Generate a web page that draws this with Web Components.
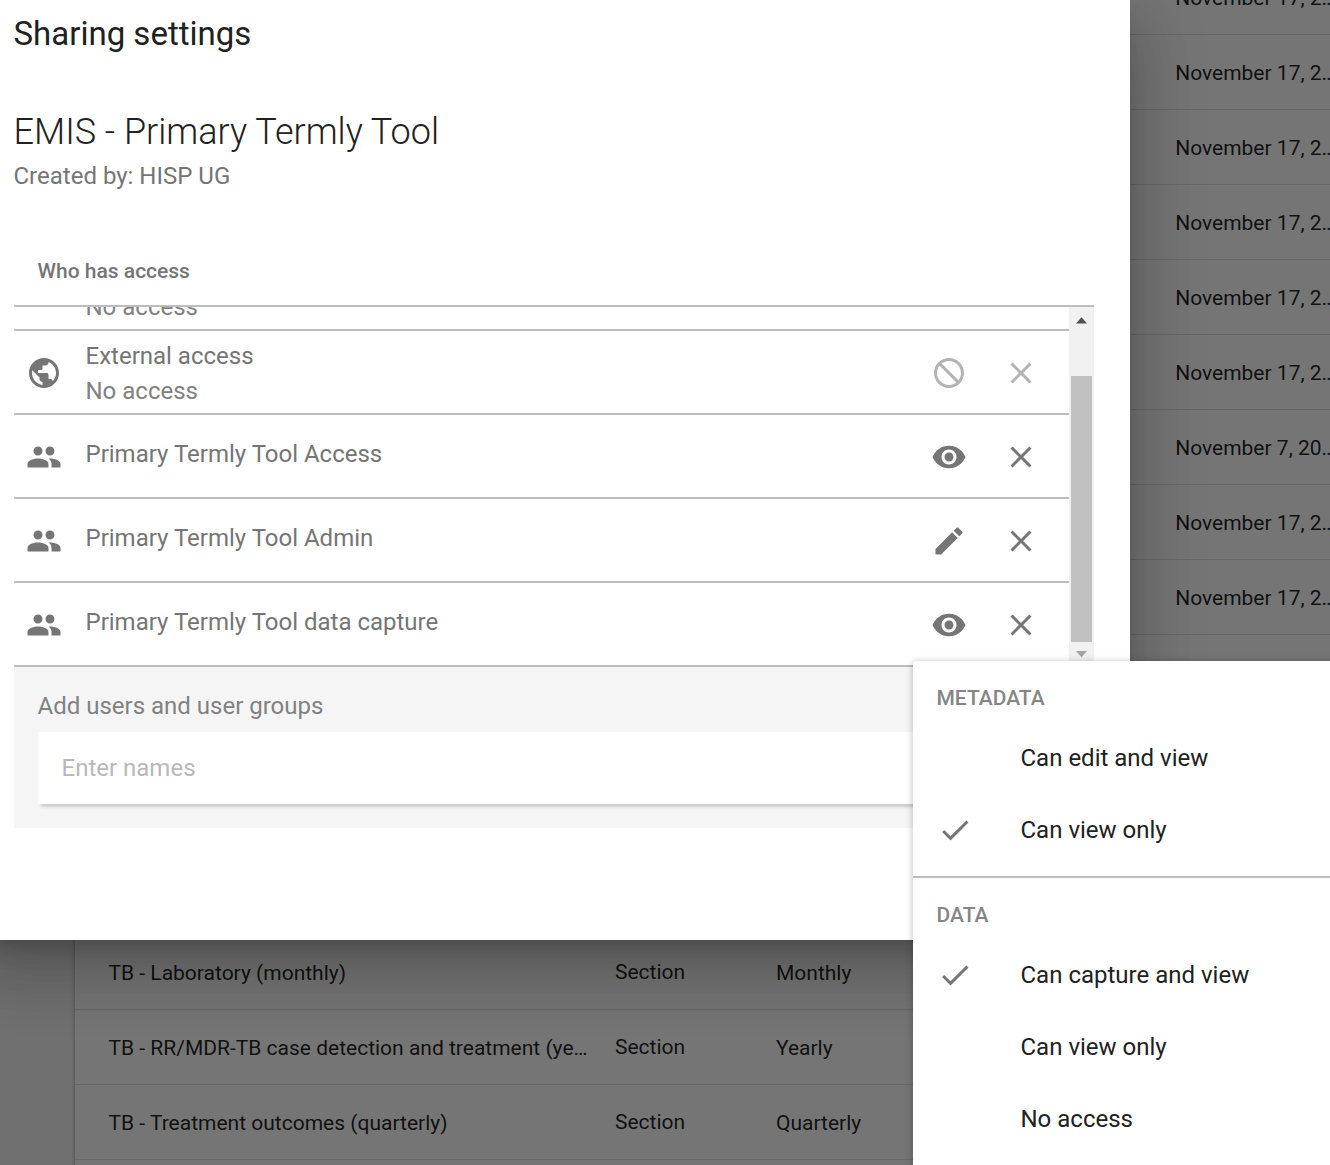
<!DOCTYPE html>
<html lang="en">
<head>
<meta charset="utf-8">
<title>Sharing settings</title>
<style>
  html, body { margin: 0; height: 100%; overflow: hidden; }
  body { font-family: Roboto, "Liberation Sans", sans-serif; background: #fff; }
</style>
</head>
<body>
<sharing-page></sharing-page>
<script>
const define = (name, html, setup) => {
  const template = document.createElement('template');
  template.innerHTML = html;
  customElements.define(name, class extends HTMLElement {
    constructor() {
      super();
      this.attachShadow({ mode: 'open' }).append(template.content.cloneNode(true));
    }
    connectedCallback() { if (setup) setup(this, this.shadowRoot); }
  });
};

/* Material icon paths on a 24 unit grid */
const ICONS = {
  globe: 'M12 2C6.48 2 2 6.48 2 12s4.48 10 10 10 10-4.48 10-10S17.52 2 12 2zm-1 17.93c-3.95-.49-7-3.85-7-7.93 0-.62.08-1.21.21-1.79L9 15v1c0 1.1.9 2 2 2v1.93zm6.9-2.54c-.26-.81-1-1.39-1.9-1.39h-1v-3c0-.55-.45-1-1-1H8v-2h2c.55 0 1-.45 1-1V7h2c1.1 0 2-.9 2-2v-.41c2.93 1.19 5 4.06 5 7.41 0 2.08-.8 3.97-2.1 5.39z',
  group: 'M16 11c1.66 0 2.99-1.34 2.99-3S17.66 5 16 5c-1.66 0-3 1.34-3 3s1.34 3 3 3zm-8 0c1.66 0 2.99-1.34 2.99-3S9.66 5 8 5C6.34 5 5 6.34 5 8s1.34 3 3 3zm0 2c-2.33 0-7 1.17-7 3.5V19h14v-2.5c0-2.33-4.67-3.5-7-3.5zm8 0c-.29 0-.62.02-.97.05 1.16.84 1.97 1.97 1.97 3.45V19h6v-2.5c0-2.33-4.67-3.5-7-3.5z',
  block: 'M12 2C6.48 2 2 6.48 2 12s4.48 10 10 10 10-4.48 10-10S17.52 2 12 2zM4 12c0-1.85.63-3.55 1.69-4.9L16.9 18.31C15.55 19.37 13.85 20 12 20c-4.42 0-8-3.58-8-8zm14.31 4.9L7.1 5.69C8.45 4.63 10.15 4 12 4c4.42 0 8 3.58 8 8 0 1.85-.63 3.55-1.69 4.9z',
  eye: 'M12 4.5C7 4.5 2.73 7.61 1 12c1.73 4.39 6 7.5 11 7.5s9.27-3.11 11-7.5c-1.73-4.39-6-7.5-11-7.5zM12 17c-2.76 0-5-2.24-5-5s2.24-5 5-5 5 2.24 5 5-2.24 5-5 5zm0-8c-1.66 0-3 1.34-3 3s1.34 3 3 3 3-1.34 3-3-1.34-3-3-3z',
  pencil: 'M3 17.25V21h3.75L17.81 9.94l-3.75-3.75L3 17.25zM20.71 7.04c.39-.39.39-1.02 0-1.41l-2.34-2.34c-.39-.39-1.02-.39-1.41 0l-1.83 1.83 3.75 3.75 1.83-1.83z',
  close: 'M19 6.41L17.59 5 12 10.59 6.41 5 5 6.41 10.59 12 5 17.59 6.41 19 12 13.41 17.59 19 19 17.59 13.41 12z',
  check: 'M9 16.17L4.83 12l-1.42 1.41L9 19 21 7l-1.41-1.41z'
};

define('md-icon', `
  <style>
    :host { display: block; width: 36px; height: 36px; color: #757575; flex: none; }
    :host([muted]) { color: #b3b3b3; }
    svg { display: block; width: 100%; height: 100%; fill: currentColor; }
  </style>
  <svg viewBox="0 0 24 24" aria-hidden="true"><path></path></svg>`,
  (el, root) => root.querySelector('path').setAttribute('d', ICONS[el.getAttribute('name')] || ''));

/* Table underneath the dialog */
define('data-row', `
  <style>
    :host { display: grid; grid-template-columns: 506.5px 161px 399.2px 1fr; box-sizing: border-box;
      height: 75px; padding: 1px 0 0 33.5px; border-bottom: 1px solid #dfdfdf; align-items: center;
      font-size: 21px; line-height: 28px; color: rgba(0,0,0,.87); white-space: nowrap; flex: none; }
    .type { padding-bottom: 2px; }
  </style>
  <span class="name"><slot name="name"></slot></span><span class="type"><slot name="type"></slot></span>
  <span><slot name="period"></slot></span><span><slot name="date"></slot></span>`);

define('data-list', `
  <style>
    :host { display: flex; height: 100%; background: #f3f3f3; padding-left: 75px; }
    .card { flex: 1; min-width: 0; display: flex; flex-direction: column; background: #fff; margin-top: -40px;
      box-shadow: 0 1.5px 4px rgba(0,0,0,.35); }
  </style>
  <div class="card"><slot></slot></div>`);

/* One entry of the access list */
define('access-row', `
  <style>
    :host { display: flex; box-sizing: border-box; height: 84px; flex: none; align-items: center;
      border-bottom: 2px solid #bdbdbd; padding: 0 30px 0 12px; }
    .text { flex: 1; margin-left: 24px; font-size: 24px; line-height: 35px; font-weight: 400;
      color: #757575; padding-bottom: 4px; }
    :host([lines="2"]) .text { padding: 4px 0 0; }
    .line { min-height: 35px; display: block; }
    .note { display: none; color: #818181; }
    :host([lines="2"]) .note { display: block; }
    .actions { display: flex; gap: 36px; }
    md-icon { margin-top: 2px; }
  </style>
  <md-icon class="lead"></md-icon>
  <div class="text"><span class="line"><slot></slot></span><span class="line note"><slot name="note"></slot></span></div>
  <div class="actions"><md-icon class="mode"></md-icon><md-icon class="remove" name="close"></md-icon></div>`,
  (el, root) => {
    root.querySelector('.lead').setAttribute('name', el.getAttribute('icon') || '');
    root.querySelector('.mode').setAttribute('name', el.getAttribute('mode') || '');
    root.querySelectorAll('md-icon').forEach(i => { i.connectedCallback(); });
    if (el.hasAttribute('muted')) root.querySelectorAll('.actions md-icon').forEach(i => i.setAttribute('muted', ''));
  });

define('scroll-rail', `
  <style>
    :host { display: flex; flex-direction: column; align-items: center; width: 25px; background: #f1f1f1; flex: none; }
    svg { display: block; width: 25px; height: 25px; flex: none; }
    .lane { height: 310px; width: 21px; padding-top: 44px; box-sizing: border-box; }
    .thumb { height: 266px; background: #c1c1c1; }
  </style>
  <svg viewBox="0 0 25 25"><path d="M7 16.5h11L12.5 10.3z" fill="#505050"/></svg>
  <div class="lane"><div class="thumb"></div></div>
  <svg viewBox="0 0 25 25"><path d="M7 9h11L12.5 15.2z" fill="#a3a3a3"/></svg>`);

define('access-list', `
  <style>
    :host { display: flex; height: 360px; border-top: 2px solid #bdbdbd; overflow: hidden; }
    .rows { flex: 1; display: flex; flex-direction: column; justify-content: flex-end; overflow: hidden; }
  </style>
  <div class="rows"><slot></slot></div><scroll-rail></scroll-rail>`);

define('add-people', `
  <style>
    :host { display: block; background: #f5f5f5; padding: 22px 24px 24px; box-sizing: border-box; height: 161px; }
    label { display: block; font-size: 24px; line-height: 34px; color: #818181; }
    .field { margin-top: 9px; height: 72px; box-sizing: border-box; padding: 0 24px; background: #fff;
      display: flex; align-items: center; font-size: 24px; color: #b8b8b8; box-shadow: 3px 3px 3px #ccc; }
  </style>
  <label><slot></slot></label><div class="field"><slot name="hint"></slot></div>`);

define('sharing-dialog', `
  <style>
    :host { display: block; box-sizing: border-box; width: 1152px; height: 940px; padding: 0 36px; background: #fff;
      box-shadow: 0 16.5px 22.5px -10.5px rgba(0,0,0,.2), 0 36px 57px 4.5px rgba(0,0,0,.14), 0 13.5px 69px 12px rgba(0,0,0,.12); }
    h1, h2, h3, p { margin: 0; }
    h1 { padding-top: 10px; font-size: 33px; line-height: 48px; font-weight: 400; color: #212121; }
    h2 { padding-top: 48px; font-size: 36px; line-height: 52px; font-weight: 300; color: #212121; }
    p { font-size: 24px; line-height: 36px; color: #757575; }
    h3 { padding: 61px 24px 0; height: 50px; font-size: 21px; line-height: 32px; font-weight: 500; color: #757575; }
  </style>
  <h1><slot name="title"></slot></h1>
  <h2><slot name="object"></slot></h2>
  <p><slot name="author"></slot></p>
  <h3>Who has access</h3>
  <slot></slot>`);

define('menu-group', `
  <style>
    :host { display: block; padding: 12px 0 10px; }
    :host([divided]) { border-bottom: 2px solid #bdbdbd; }
    header { padding: 0 24px; height: 49px; line-height: 51px; font-size: 21px; font-weight: 500; color: #858585; }
  </style>
  <header><slot name="label"></slot></header><slot></slot>`);

define('menu-option', `
  <style>
    :host { display: flex; align-items: center; height: 72px; padding: 0 24px; font-size: 24px; color: #212121; }
    .mark { width: 36px; margin-right: 48px; }
    md-icon { display: none; }
    :host([checked]) md-icon { display: block; }
  </style>
  <div class="mark"><md-icon name="check"></md-icon></div><slot></slot>`);

define('access-menu', `
  <style>
    :host { display: block; background: #fff; border-radius: 3px; width: 440px; height: 520px;
      box-shadow: 0 1.5px 9px rgba(0,0,0,.14), 0 1.5px 6px rgba(0,0,0,.14); }
  </style>
  <slot></slot>`);

define('sharing-page', `
  <style>
    :host { display: block; position: relative; width: 1330px; height: 1165px; overflow: hidden; }
    .shade { position: absolute; inset: 0; background: rgba(0,0,0,.54); }
    sharing-dialog { position: absolute; left: -22.5px; top: 0; }
    access-menu { position: absolute; left: 912.5px; top: 661px; }
  </style>
  <data-list>
    <data-row><span slot="date">November 17, 2…</span></data-row>
    <data-row><span slot="date">November 17, 2…</span></data-row>
    <data-row><span slot="date">November 17, 2…</span></data-row>
    <data-row><span slot="date">November 17, 2…</span></data-row>
    <data-row><span slot="date">November 17, 2…</span></data-row>
    <data-row><span slot="date">November 17, 2…</span></data-row>
    <data-row><span slot="date">November 7, 20…</span></data-row>
    <data-row><span slot="date">November 17, 2…</span></data-row>
    <data-row><span slot="date">November 17, 2…</span></data-row>
    <data-row></data-row><data-row></data-row><data-row></data-row><data-row></data-row>
    <data-row><span slot="name">TB - Laboratory (monthly)</span><span slot="type">Section</span><span slot="period">Monthly</span></data-row>
    <data-row><span slot="name">TB - RR/MDR-TB case detection and treatment (ye…</span><span slot="type">Section</span><span slot="period">Yearly</span></data-row>
    <data-row><span slot="name">TB - Treatment outcomes (quarterly)</span><span slot="type">Section</span><span slot="period">Quarterly</span></data-row>
    <data-row></data-row>
  </data-list>
  <div class="shade"></div>
  <sharing-dialog>
    <span slot="title">Sharing settings</span>
    <span slot="object">EMIS - Primary Termly Tool</span>
    <span slot="author">Created by: HISP UG</span>
    <access-list>
      <access-row lines="2" muted><span slot="note">No access</span></access-row>
      <access-row lines="2" icon="globe" mode="block" muted>External access<span slot="note">No access</span></access-row>
      <access-row icon="group" mode="eye">Primary Termly Tool Access</access-row>
      <access-row icon="group" mode="pencil">Primary Termly Tool Admin</access-row>
      <access-row icon="group" mode="eye">Primary Termly Tool data capture</access-row>
    </access-list>
    <add-people>Add users and user groups<span slot="hint">Enter names</span></add-people>
  </sharing-dialog>
  <access-menu>
    <menu-group divided><span slot="label">METADATA</span>
      <menu-option>Can edit and view</menu-option>
      <menu-option checked>Can view only</menu-option>
    </menu-group>
    <menu-group><span slot="label">DATA</span>
      <menu-option checked>Can capture and view</menu-option>
      <menu-option>Can view only</menu-option>
      <menu-option>No access</menu-option>
    </menu-group>
  </access-menu>`);
</script>
</body>
</html>
